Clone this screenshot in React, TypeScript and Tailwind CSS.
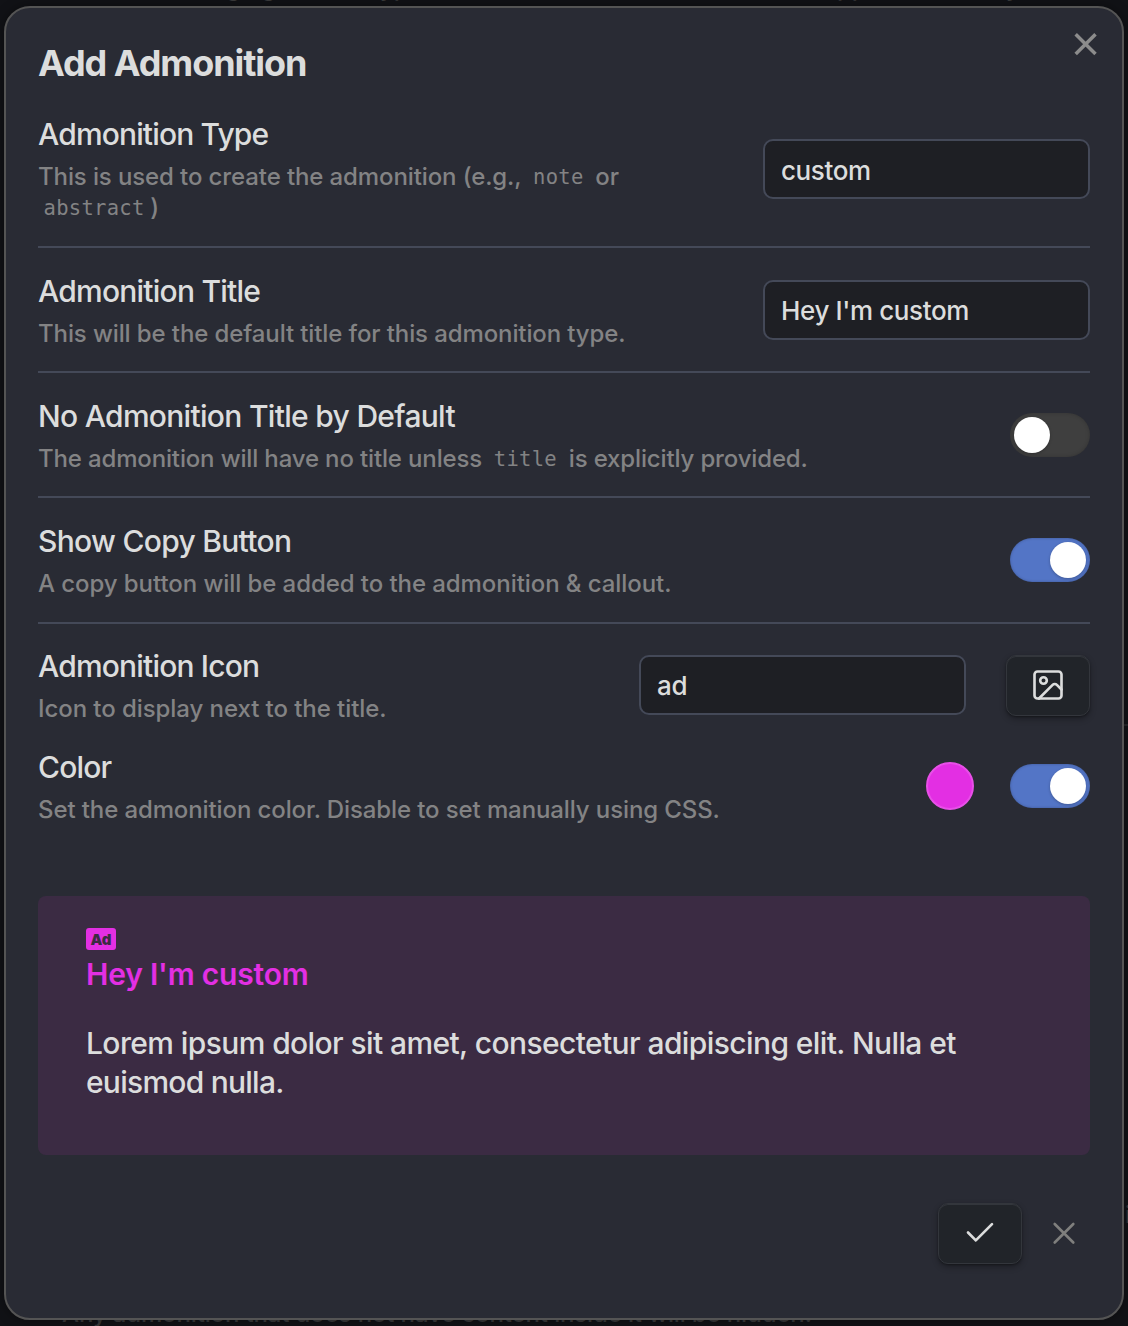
import type { ReactNode } from "react";

function Code({ children }: { children: ReactNode }) {
  return (
    <code className="relative -top-px px-[5.5px] font-['DejaVu_Sans_Mono',monospace] text-[20.5px] leading-none font-normal tracking-[0.3px]">
      {children}
    </code>
  );
}

function Toggle({ on }: { on: boolean }) {
  return (
    <button
      role="switch"
      aria-checked={on}
      className={
        on
          ? "flex h-11 w-20 shrink-0 items-center justify-end rounded-full bg-[#5375c6] p-1 shadow-[inset_0_0_3px_rgba(0,0,0,0.25)]"
          : "flex h-11 w-20 shrink-0 items-center justify-start rounded-full bg-[#3f3f3f] p-1 shadow-[inset_0_0_4px_rgba(0,0,0,0.2)]"
      }
    >
      <span className="size-9 rounded-full bg-white shadow-[0_1px_3px_rgba(0,0,0,0.25)]" />
    </button>
  );
}

function TextField({ value, className }: { value: string; className: string }) {
  return (
    <input
      readOnly
      value={value}
      className={`h-[60px] w-[327px] shrink-0 rounded-[10px] border-2 border-[#444958] bg-[#1e1f24] px-4 text-[26px] font-medium text-[#dcdddd] outline-none ${className}`}
    />
  );
}

type SettingProps = {
  name: string;
  nameClass: string;
  description: ReactNode;
  descriptionClass: string;
  className: string;
  children: ReactNode;
};

function Setting({ name, nameClass, description, descriptionClass, className, children }: SettingProps) {
  return (
    <div className={`flex items-center justify-between ${className}`}>
      <div className="h-full whitespace-nowrap">
        <div className={`text-[30px] leading-[39px] ${nameClass}`}>{name}</div>
        <div className={`mt-[7px] text-2xl leading-[31px] text-[#838384] ${descriptionClass}`}>{description}</div>
      </div>
      {children}
    </div>
  );
}

const raised =
  "flex h-[61px] w-[84px] items-center justify-center rounded-[10px] border border-[#33363c] bg-[#212429] shadow-[0_3px_6px_rgba(0,0,0,0.3),0_1px_2px_rgba(0,0,0,0.3),inset_0_1px_0_#33363c]";

export default function App() {
  return (
    <div className="relative h-[1326px] w-[1128px] overflow-hidden bg-[#111216] px-1 pt-1.5 font-[Inter,sans-serif] font-medium text-[#dcdddd]">
      <div aria-hidden="true" className="text-2xl leading-[30px] text-[#3a3a3b]">
        <span className="absolute -top-[27px] left-[226px]">ging</span>
        <span className="absolute -top-[27px] left-[380px]">yp</span>
        <span className="absolute -top-[27px] left-[837px]">pp</span>
        <span className="absolute -top-[27px] left-[1006px]">y</span>
        <span className="absolute top-[1299px] left-[62px] tracking-[-0.14px] whitespace-nowrap">
          Any admonition that does not have content inside it will be hidden.
        </span>
        <span className="absolute top-[1200px] left-[1125px]">i</span>
        <span className="absolute top-[724px] left-[1124px] h-0.5 w-1 bg-[#242529]" />
      </div>

      <div className="relative h-[1314px] w-[1120px] rounded-[26px] border-2 border-[#545454] bg-[#292b34] px-8 pt-[33px] shadow-[0_0_12px_rgba(0,0,0,0.4)]">
        <button aria-label="Close" className="absolute top-[24px] right-[24px] text-[#8c8c8c]">
          <svg width="25" height="25" viewBox="0 0 25 25" fill="none" stroke="currentColor" strokeWidth="3.5">
            <path d="M2.7 2.3 22.5 22.1M22.5 2.3 2.7 22.1" />
          </svg>
        </button>

        <h1 className="text-4xl leading-[44px] font-bold tracking-[-1.06px]">Add Admonition</h1>

        <Setting
          className="mt-[30px] h-[108px]"
          name="Admonition Type"
          nameClass="tracking-[-0.85px]"
          descriptionClass="tracking-[-0.11px]"
          description={
            <>
              This is used to create the admonition (e.g., <Code>note</Code> or
              <br />
              <Code>abstract</Code>)
            </>
          }
        >
          <TextField value="custom" className="pt-0.5 tracking-[-0.4px]" />
        </Setting>

        <Setting
          className="mt-[23px] h-[102px] border-t-2 border-[#444958] pt-6"
          name="Admonition Title"
          nameClass="tracking-[-0.77px]"
          descriptionClass="tracking-[-0.11px]"
          description="This will be the default title for this admonition type."
        >
          <TextField value="Hey I'm custom" className="tracking-[-0.38px]" />
        </Setting>

        <Setting
          className="mt-[23px] h-[102px] border-t-2 border-[#444958] pt-6"
          name="No Admonition Title by Default"
          nameClass="tracking-[-0.7px]"
          descriptionClass="tracking-[-0.15px]"
          description={
            <>
              The admonition will have no title unless <Code>title</Code> is explicitly provided.
            </>
          }
        >
          <Toggle on={false} />
        </Setting>

        <Setting
          className="mt-[23px] h-[102px] border-t-2 border-[#444958] pt-6"
          name="Show Copy Button"
          nameClass="tracking-[-0.7px]"
          descriptionClass="tracking-[-0.07px]"
          description="A copy button will be added to the admonition & callout."
        >
          <Toggle on />
        </Setting>

        <Setting
          className="mt-[24px] h-[101px] border-t-2 border-[#444958] pt-[23px]"
          name="Admonition Icon"
          nameClass="tracking-[-0.82px]"
          descriptionClass="tracking-[-0.07px]"
          description="Icon to display next to the title."
        >
          <div className="mt-px flex gap-10">
            <TextField value="ad" className="tracking-[-0.3px]" />
            <button aria-label="Choose image" className={raised}>
              <svg
                className="-mt-0.5"
                width="36"
                height="36"
                viewBox="0 0 24 24"
                fill="none"
                stroke="currentColor"
                strokeWidth="1.75"
                strokeLinecap="round"
                strokeLinejoin="round"
              >
                <rect x="3" y="3" width="18" height="18" rx="2" />
                <circle cx="9" cy="9" r="2.2" />
                <path d="m21 15-3.086-3.086a2 2 0 0 0-2.828 0L6 21" />
              </svg>
            </button>
          </div>
        </Setting>

        <Setting
          className="mt-[25px] h-[76px]"
          name="Color"
          nameClass="tracking-[-0.8px]"
          descriptionClass="tracking-[-0.11px]"
          description="Set the admonition color. Disable to set manually using CSS."
        >
          <div className="flex items-center gap-9">
            <span className="size-12 rounded-full border-2 border-[#e84fe8] bg-[#e32fe3]" />
            <Toggle on />
          </div>
        </Setting>

        <section className="mt-[72px] h-[259px] rounded-lg bg-[#3b2b43] px-12 pt-8">
          <div className="flex h-[22px] w-[30px] items-center justify-center rounded-[3px] bg-[#e32fe3] text-[15px] leading-none font-black text-[#3b2b43]">
            Ad
          </div>
          <h2 className="mt-[5px] text-[30px] leading-[39px] font-semibold tracking-[-0.2px] text-[#e32fe3]">
            Hey I'm custom
          </h2>
          <p className="mt-[30px] text-[30px] leading-[39px] tracking-[-0.6px]">
            Lorem ipsum dolor sit amet, consectetur adipiscing elit. Nulla et
            <br />
            <span className="tracking-[-0.75px]">euismod nulla.</span>
          </p>
        </section>

        <div className="mt-12 flex items-center justify-end gap-6 pr-2">
          <button aria-label="Save" className={raised}>
            <svg
              width="36"
              height="36"
              viewBox="0 0 24 24"
              fill="none"
              stroke="currentColor"
              strokeWidth="1.75"
              strokeLinecap="round"
              strokeLinejoin="round"
            >
              <path d="M20 5.4 9.2 16.3 4 11" />
            </svg>
          </button>
          <button aria-label="Cancel" className="text-[#7f7f7d]">
            <svg
              width="36"
              height="36"
              viewBox="0 0 24 24"
              fill="none"
              stroke="currentColor"
              strokeWidth="1.75"
              strokeLinecap="round"
            >
              <path d="M18.2 5.3 5.8 17.7M5.8 5.3l12.4 12.4" />
            </svg>
          </button>
        </div>
      </div>
    </div>
  );
}
